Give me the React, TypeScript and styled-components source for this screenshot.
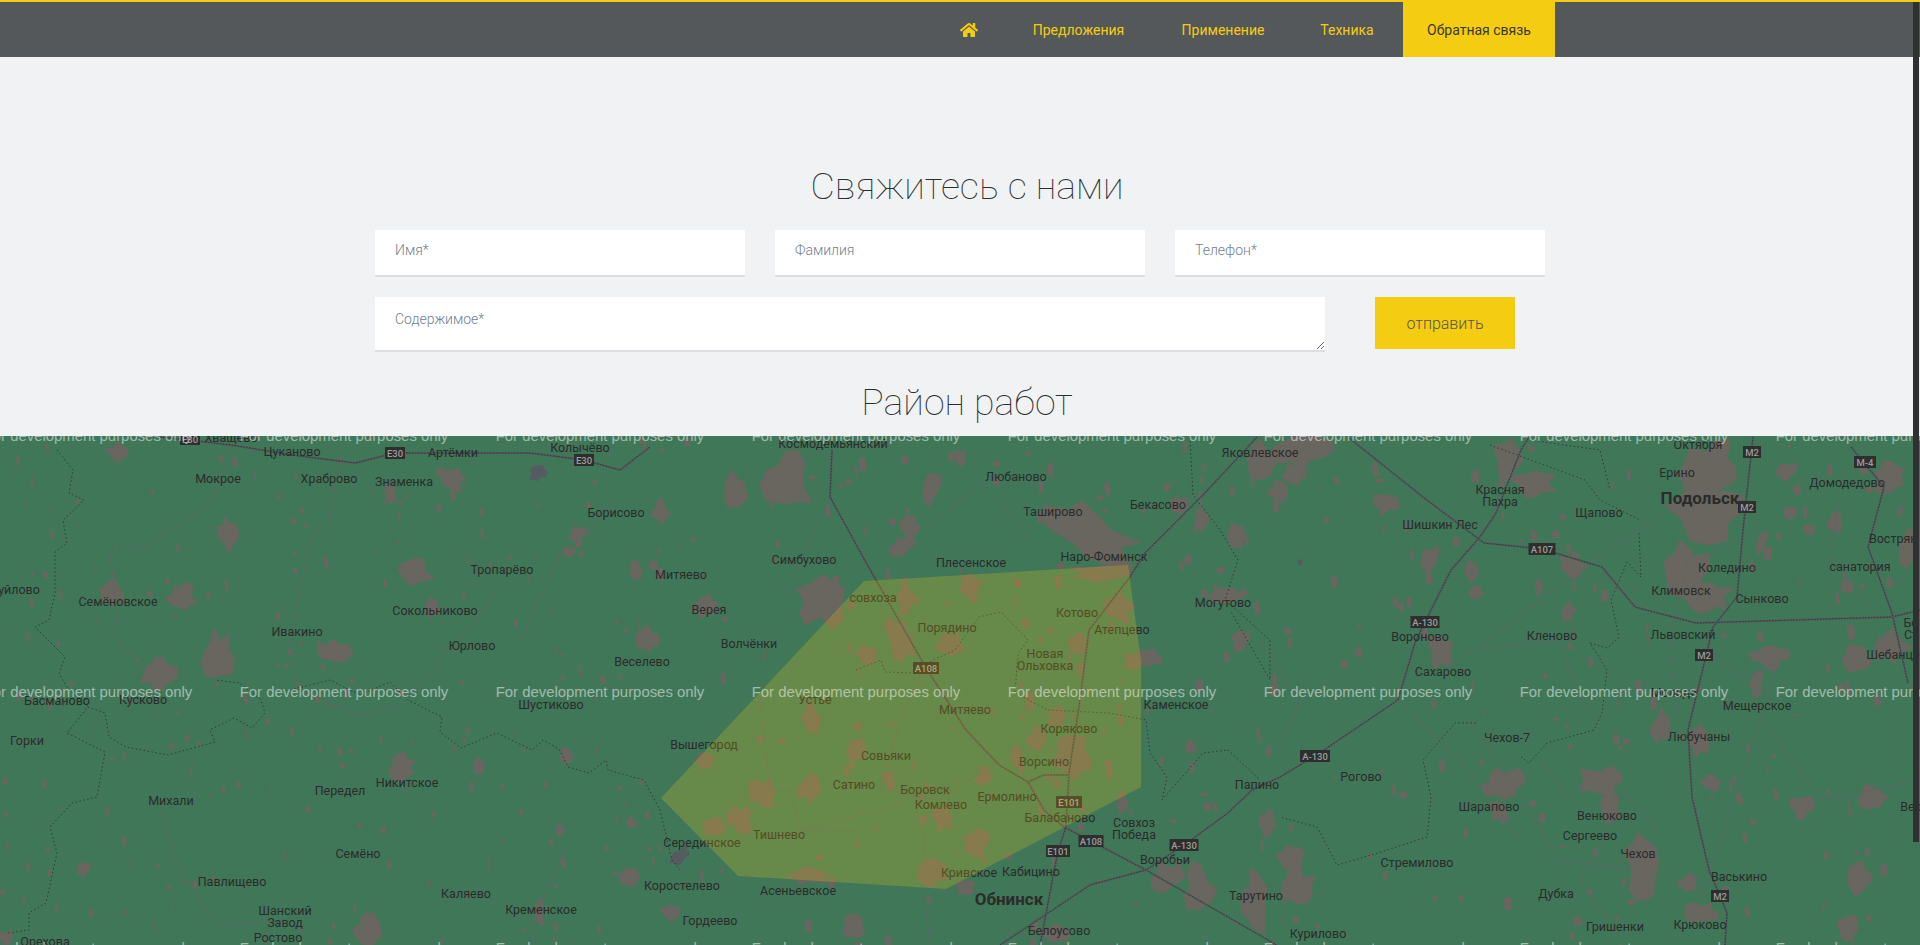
import React, { useMemo } from "react";
import styled, { createGlobalStyle } from "styled-components";
import { FaHome } from "react-icons/fa";

const Global = createGlobalStyle`
  html, body { margin: 0; padding: 0; height: 945px; overflow: hidden; background: #f1f2f4; }
  * { box-sizing: border-box; }
`;

const Page = styled.div`
  position: relative;
  width: 1920px;
  height: 945px;
  display: flex;
  flex-direction: column;
  overflow: hidden;
  font-family: Roboto, "Liberation Sans", sans-serif;
`;

const Nav = styled.nav`
  flex: none;
  height: 57px;
  border-top: 2px solid #f4cc12;
  background: #54585a;
  display: flex;
  gap: 5px;
  padding-left: 935px;
`;

const NavItem = styled.a<{ $active?: boolean; $width: number }>`
  display: flex;
  align-items: center;
  justify-content: center;
  width: ${(p) => p.$width}px;
  font-size: 14px;
  font-weight: 400;
  white-space: nowrap;
  color: ${(p) => (p.$active ? "#3a3a32" : "#f4cc12")};
  background: ${(p) => (p.$active ? "#f4cc12" : "transparent")};
`;

const Section = styled.section`
  flex: none;
  height: 379px;
  padding: 109px 0 0 375px;
  background: #f1f2f4;
`;

const Heading = styled.h2`
  margin: 0;
  width: 1184px;
  text-align: center;
  font-size: 37.5px;
  line-height: 40px;
  font-weight: 100;
  color: #2a2e30;
`;

const Form = styled.form`
  width: 1170px;
  margin: 24px 0 30px;
  display: flex;
  flex-direction: column;
  gap: 20px;
`;

const FieldRow = styled.div`
  display: grid;
  grid-template-columns: repeat(3, 370px);
  gap: 30px;
`;

const Input = styled.input`
  height: 47px;
  padding: 0 20px 6px;
  border: 0;
  border-bottom: 2px solid #dcdee3;
  background: #fff;
  outline: none;
  font: 300 14px Roboto, sans-serif;
  &::placeholder { color: #71808f; opacity: 1; }
`;

const MessageRow = styled.div`
  display: flex;
  align-items: flex-start;
  gap: 50px;
`;

const Message = styled.textarea`
  display: block;
  width: 950px;
  height: 55px;
  padding: 14px 20px;
  border: 0;
  border-bottom: 2px solid #dcdee3;
  background: #fff;
  outline: none;
  font: 300 14px Roboto, sans-serif;
  &::placeholder { color: #71808f; opacity: 1; }
`;

const Send = styled.button`
  width: 140px;
  height: 52px;
  border: 0;
  background: #f4cc12;
  color: #54564a;
  font: 300 16px Roboto, sans-serif;
`;

const MapFrame = styled.div`
  flex: 1;
  position: relative;
  overflow: hidden;
  background: #417759;
`;

const MapSvg = styled.svg`
  display: block;
  width: 1920px;
  height: 509px;
`;

const Place = styled.text<{ $big?: boolean }>`
  font-family: Roboto, "Liberation Sans", sans-serif;
  font-size: ${(p) => (p.$big ? "17px" : "12.5px")};
  font-weight: ${(p) => (p.$big ? 700 : 400)};
  fill: #2b2b2b;
  text-anchor: middle;
  dominant-baseline: central;
`;

const Shield = styled.text`
  font-family: Roboto, sans-serif;
  font-size: 9.5px;
  font-weight: 500;
  fill: #9c9c9c;
  text-anchor: middle;
  dominant-baseline: central;
`;

const Watermark = styled.text`
  font-family: "Liberation Sans", Arial, sans-serif;
  font-size: 14.9px;
  fill: rgba(255, 255, 255, 0.5);
  text-anchor: middle;
  dominant-baseline: central;
`;

const Scrollbar = styled.div`
  position: absolute;
  top: 2px;
  left: 1913px;
  width: 6px;
  height: 840px;
  background: #2f3131;
`;

type Blob = [number, number, number, number, number?];

const blobs: Blob[] = [
  [789,482,24,30,10],[735,493,14,18,-15],[661,513,8,12],[930,490,8,18,20],[910,527,8,14],[902,547,14,8,-35],
  [1090,533,50,23,25],[1201,520,8,14],[1236,537,9,12],[1279,493,9,10],[1258,460,15,16],[960,458,6,8],[1180,505,8,8],
  [228,535,11,16,-15],[118,452,10,9],[451,478,14,10,30],[390,493,5,9],[416,572,15,12,20],[182,598,13,15,-15],[112,593,11,12],
  [218,657,14,25,5],[157,673,16,17,15],[337,652,17,10,10],[432,607,6,10],[577,535,7,10],[569,552,6,5],[636,573,6,10],
  [824,603,25,22,-10],[707,607,14,10],[648,640,10,12],[905,597,8,18],[971,587,10,14],[901,640,14,22,-15],[866,655,10,9],
  [950,643,14,12],[1101,573,32,10,-5],[1117,607,16,16],[1079,643,10,10],[1146,658,10,10],[1132,663,8,10],[813,720,9,18,-10],
  [1056,717,10,10],[1030,700,5,10],[1036,740,12,10],[1073,757,18,22],[1017,757,7,14,-10],[856,750,10,10],[705,760,9,8],
  [762,792,16,13],[809,788,10,13],[740,820,12,14],[713,827,12,10],[889,780,6,12,-20],[944,818,10,12],[983,778,7,10],
  [975,845,14,14],[930,873,16,12],[809,875,24,8],[1122,803,5,10],[1199,890,14,25],[1166,877,16,14],[1256,903,12,30],
  [1056,933,16,8],[671,912,9,10],[854,927,11,13],[966,887,8,7],[1224,597,20,8],[1240,640,8,12],[1191,747,5,6],[1268,823,8,12],
  [1704,513,40,32],[1712,467,28,28],[1688,570,20,28],[1708,597,24,16],[1508,460,16,20],[1533,483,20,14],[1386,503,13,10],
  [1300,450,30,16],[1296,473,12,10],[1431,558,8,12,25],[1470,572,5,10],[1476,593,7,6],[1572,567,13,14],[1539,587,3,9],[1568,613,6,10,20],
  [1441,650,14,16],[1770,657,18,12],[1855,657,16,14],[1757,683,5,16,15],[1660,727,9,16],[1700,740,11,16],[1504,783,22,14],
  [1598,780,22,14],[1610,807,10,16],[1500,813,9,10],[1643,863,16,36],[1802,807,12,11],[1872,797,13,10],[1292,860,14,16],
  [1296,887,18,18],[1688,883,10,8],[1860,880,12,16],[1847,930,10,14],[1700,913,16,10],[1712,783,11,8],[1892,647,18,16],
  [1890,477,18,18],[1912,547,14,20],[1786,473,10,8],[1762,543,4,12,20],[1790,513,6,6],[1810,530,5,5],[1835,523,6,10],[1847,587,6,6],
  [402,767,13,13],[368,930,12,16,15],[631,877,10,10],[566,756,6,7],[478,767,5,7],[560,830,4,6],[631,823,5,5],[539,913,5,12],[6,937,7,6],[84,869,6,7,40],
];

const lakes: Blob[] = [[537,473,9,9],[681,855,6,12,45],[1300,562,3,3]];

const pts = (a: number[]) => {
  let s = "";
  for (let i = 0; i < a.length; i += 2) s += (i ? "L" : "M") + a[i] + " " + a[i + 1];
  return s;
};

const majorRoads = [
  [832,450,830,497,863,557,889,603,926,668,966,730,999,765,1028,782,1044,810,1064,827,1089,840,1146,870,1268,940,1300,960],
  [1257,437,1205,493,1145,553,1130,577,1089,630,1079,707,1069,773,1066,827,1058,851,1040,945],
  [1028,782,1044,775,1069,775],
  [1000,945,1090,885,1146,870,1184,845,1228,813,1252,790,1280,777,1315,756,1398,700,1415,643,1425,622,1451,570,1480,537,1496,513,1521,450,1529,437],
  [1349,438,1423,497,1484,543,1542,549,1602,567,1635,607,1696,623,1892,617,1920,610],
  [1753,437,1743,530,1737,597,1713,627,1688,730,1692,797,1709,870,1727,913,1725,945],
  [1851,447,1884,487,1868,547,1892,613,1908,683],
  [160,437,231,445,292,455,355,463,395,453,453,453,530,453,584,460,620,470,650,447],
];

const minorRoads = [
  [1598,557,1460,660,1443,668],[1688,497,1640,530,1598,557],[1688,560,1670,640,1680,720],[1398,700,1460,760,1490,800,1520,840],
  [231,445,215,500,150,545,110,555,115,600,118,640,150,680,157,720],
  [340,450,330,520,310,540,290,640,300,690,360,715,400,705,440,660,500,590],
  [610,500,600,520,560,555,520,640],[160,810,175,860,200,900,220,925,284,920],
  [565,850,540,905,530,945],[760,700,770,790,790,790,800,830,860,830],[830,497,800,560,790,600],
  [925,668,900,720,880,790,940,800,1000,760],[780,835,880,810,960,780],[925,820,925,900,930,945],
  [1000,500,1030,540],[930,525,960,500,990,480],[1480,650,1560,640,1580,700,1600,720],
  [1660,830,1600,770,1570,800,1540,760],[1760,720,1800,770,1820,800,1870,790,1920,780],[1470,720,1560,860,1640,870],
  [1700,640,1740,680,1780,660,1700,900],[1840,500,1830,560,1880,620],[1280,745,1300,700,1260,640],
  [1000,930,1060,945],[1700,560,1760,530],[1620,810,1580,880,1620,940],
];

const borders = [
  [57,450,73,470,69,493,84,500,63,520,67,543,55,552,55,593,49,620,35,627,65,657,59,673,67,687,88,707,67,733,105,752,97,797,72,803,50,827,57,853,46,903,29,913,29,930,8,933],
  [88,707,105,713,109,737,126,747,168,755,215,742,210,730,234,718,252,728,265,713,261,700,240,683,215,680],
  [290,690,330,680,360,695,390,682,408,700,442,717,440,732,461,748,497,733,532,750,543,740,560,750,568,767,589,773,606,760,608,770,644,780,660,810,672,860,680,870],
  [856,670,881,660,885,672,913,673,933,660,955,650,979,617,1001,612,1028,640,1018,653,1015,693,1048,710,1109,713,1146,720,1150,753,1167,777,1162,800,1203,753,1228,750,1260,780],
  [1639,533,1641,577,1627,562,1611,600,1619,637,1607,648,1590,643,1607,670,1602,713,1594,730,1547,743,1529,763,1521,757],
  [1476,723,1455,723,1423,760,1431,797,1427,837,1378,853,1337,865,1317,827,1280,817],
  [1190,437,1193,495,1220,530,1238,560,1225,600,1270,640,1270,680,1230,610],
  [1490,445,1585,480,1600,500,1640,520],[1530,440,1600,450,1610,490],
];

const places: [string, number, number, boolean?][] = [
  ["Хващево",231,437],["Цуканово",292,451],["Артёмки",453,452],["Колычёво",580,447],["Космодемьянский",833,443],
  ["Мокрое",218,478],["Храброво",329,478],["Знаменка",404,481],["Борисово",616,512],["Любаново",1016,476],["Таширово",1053,511],
  ["Бекасово",1158,504],["Яковлевское",1260,452],["Тропарёво",502,569],["Семёновское",118,601],["Сокольниково",435,610],
  ["уйлово",19,589],["Ивакино",297,631],["Юрлово",472,645],["Веселево",642,661],["Митяево",681,574],["Симбухово",804,559],
  ["Плесенское",971,562],["Наро-Фоминск",1104,556],["Верея",709,609],["совхоза",873,597],["Порядино",947,627],["Котово",1077,612],
  ["Атепцево",1122,629],["Могутово",1223,602],["Волчёнки",749,643],["Новая",1045,653],["Ольховка",1045,665],["Устье",815,699],
  ["Митяево",965,709],["Каменское",1176,704],["Коряково",1069,728],["Вышегород",704,744],["Совьяки",886,755],["Ворсино",1044,761],
  ["Сатино",854,784],["Боровск",925,789],["Комлево",941,804],["Ермолино",1007,796],["Папино",1257,784],["Балабаново",1060,817],
  ["Совхоз",1134,822],["Победа",1134,834],["Тишнево",779,834],["Серединское",702,842],["Воробьи",1165,859],["Кривское",969,872],
  ["Кабицино",1031,871],["Коростелево",682,885],["Асеньевское",798,890],["Обнинск",1009,899,true],["Гордеево",710,920],["Белоусово",1059,930],
  ["Тарутино",1256,895],["Шустиково",551,704],["Басманово",57,700],["Кусково",143,699],["Горки",27,740],["Никитское",407,782],
  ["Передел",340,790],["Михали",171,800],["Семёно",358,853],["Павлищево",232,881],["Каляево",466,893],["Кременское",541,909],
  ["Шанский",285,910],["Завод",285,922],["Ростово",278,937],["Орехова",45,941],
  ["Октября",1698,444],["Ерино",1677,472],["Красная",1500,489],["Пахра",1500,501],["Домодедово",1847,482],["Подольск",1700,498,true],
  ["Щапово",1599,512],["Шишкин Лес",1440,524],["Востряк",1893,538],["Коледино",1727,567],["санатория",1860,566],["Климовск",1681,590],
  ["Сынково",1762,598],["Львовский",1683,634],["Кленово",1552,635],["Вороново",1420,636],["Сахарово",1443,671],["Молоди",1674,692],
  ["Мещерское",1757,705],["Любучаны",1699,736],["Чехов-7",1507,737],["Рогово",1361,776],["Шарапово",1489,806],["Венюково",1607,815],
  ["Сергеево",1590,835],["Чехов",1638,853],["Стремилово",1417,862],["Васькино",1739,876],["Дубка",1556,893],["Гришенки",1615,926],
  ["Крюково",1700,924],["Курилово",1318,933],["Шебанцево",1900,654],["Бо",1911,622],["Ст",1911,634],["Вер",1911,806],
];

const shields: [string, number, number, number][] = [
  ["E30",190,439,20],["E30",395,453,20],["E30",584,460,20],["A108",926,668,26],["E101",1069,802,26],["E101",1058,851,24],
  ["A108",1091,841,25],["A-130",1184,845,29],["M2",1752,452,18],["M-4",1865,462,22],["M2",1747,507,18],["A107",1542,549,27],
  ["A-130",1425,622,29],["M2",1704,655,18],["A-130",1315,756,30],["M2",1720,896,18],
];

// An irregular outline: a ring of points with a strong jitter, joined by straight edges.
const blobPath = (b: Blob, rnd: () => number) => {
  const [cx, cy, rx, ry, rot = 0] = b;
  const n = 13;
  const t = (rot * Math.PI) / 180;
  const out: number[] = [];
  for (let i = 0; i < n; i++) {
    const a = (i / n) * Math.PI * 2;
    const k = 0.55 + rnd() * 0.7;
    const x = Math.cos(a) * rx * k;
    const y = Math.sin(a) * ry * k;
    out.push(+(cx + x * Math.cos(t) - y * Math.sin(t)).toFixed(1), +(cy + x * Math.sin(t) + y * Math.cos(t)).toFixed(1));
  }
  return pts(out) + "Z";
};

const TerrainMap = () => {
  const { blobD, speckD, lakeD } = useMemo(() => {
    let seed = 1337;
    const rnd = () => {
      seed = (seed * 16807) % 2147483647;
      return (seed - 1) / 2147483646;
    };
    const blobD = blobs.map((b) => blobPath(b, rnd)).join("");
    const lakeD = lakes.map((b) => blobPath(b, rnd)).join("");
    let speckD = "";
    for (let i = 0; i < 520; i++) {
      const right = i % 5 < 3;
      const x = right ? 640 + rnd() * 1280 : rnd() * 660;
      const y = 437 + rnd() * 508;
      const w = 1.5 + rnd() * (right ? 6 : 3);
      const h = 2 + rnd() * (right ? 10 : 6);
      const sk = (rnd() - 0.5) * 6;
      speckD += pts([+x.toFixed(1), +y.toFixed(1), +(x + w).toFixed(1), +(y + sk).toFixed(1), +(x + w - sk).toFixed(1), +(y + h).toFixed(1), +(x - sk).toFixed(1), +(y + h - sk).toFixed(1)]) + "Z";
    }
    return { blobD, speckD, lakeD };
  }, []);

  const rows = [436, 692, 948];
  const cols = [-168, 88, 344, 600, 856, 1112, 1368, 1624, 1880];

  return (
    <MapSvg viewBox="0 436 1920 509" role="img">
      <path d={blobD} fill="#696660" strokeLinejoin="round" stroke="#696660" strokeWidth="2" />
      <path d={speckD} fill="#696660" />
      <path d={lakeD} fill="#545c60" />
      {minorRoads.map((r, i) => (
        <path key={i} d={pts(r)} fill="none" stroke="#5d6664" strokeWidth="0.8" />
      ))}
      {borders.map((r, i) => (
        <path key={i} d={pts(r)} fill="none" stroke="#2f3a36" strokeWidth="1" strokeDasharray="1.5 2.5" strokeLinejoin="round" />
      ))}
      {majorRoads.map((r, i) => (
        <g key={i}>
          <path d={pts(r)} fill="none" stroke="#545a5c" strokeWidth="2" strokeLinejoin="round" />
          <path d={pts(r)} fill="none" stroke="#33383a" strokeWidth="1" strokeDasharray="1.5 1.5" strokeLinejoin="round" />
        </g>
      ))}
      {shields.map(([t, x, y, w], i) => (
        <g key={i}>
          <rect x={x - w / 2} y={y - 6} width={w} height={12} fill="#2e2e2e" />
          <Shield x={x} y={y}>{t}</Shield>
        </g>
      ))}
      {places.map(([t, x, y, big], i) => (
        <Place key={i} x={x} y={y} $big={big}>{t}</Place>
      ))}
      <polygon points="864,581 1128,565 1141,660 1141,787 946,889 738,876 661,798" fill="rgb(255,210,10)" fillOpacity="0.2" />
      {rows.map((y) =>
        cols.map((x) => (
          <Watermark key={`${x}-${y}`} x={x} y={y}>For development purposes only</Watermark>
        ))
      )}
    </MapSvg>
  );
};

export default function App() {
  return (
    <Page>
      <Global />
      <Nav>
        <NavItem $width={67} aria-label="Главная"><FaHome size={18} /></NavItem>
        <NavItem $width={143}>Предложения</NavItem>
        <NavItem $width={136}>Применение</NavItem>
        <NavItem $width={102}>Техника</NavItem>
        <NavItem $width={152} $active>Обратная связь</NavItem>
      </Nav>
      <Section>
        <Heading>Свяжитесь с нами</Heading>
        <Form>
          <FieldRow>
            <Input placeholder="Имя*" />
            <Input placeholder="Фамилия" />
            <Input placeholder="Телефон*" />
          </FieldRow>
          <MessageRow>
            <Message placeholder="Содержимое*" />
            <Send type="button">отправить</Send>
          </MessageRow>
        </Form>
        <Heading>Район работ</Heading>
      </Section>
      <MapFrame>
        <TerrainMap />
      </MapFrame>
      <Scrollbar />
    </Page>
  );
}
